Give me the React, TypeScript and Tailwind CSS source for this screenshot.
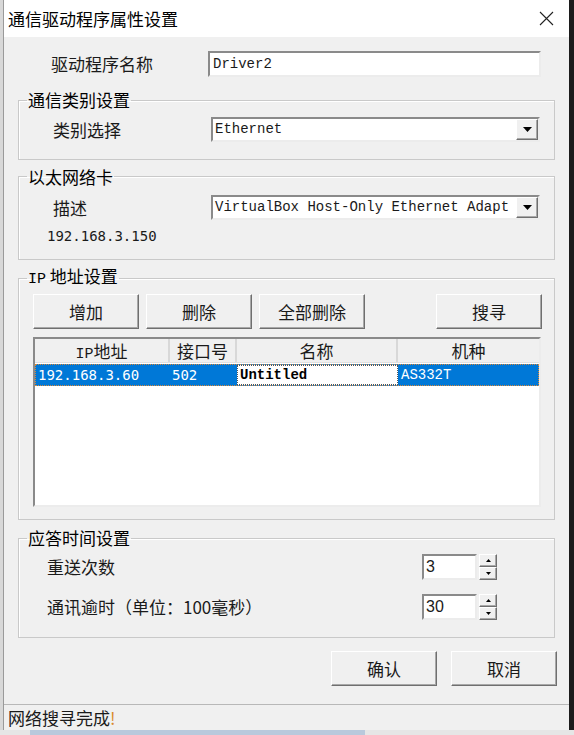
import React from "react";

const raised =
  "bg-[#f0f0f0] border border-t-white border-l-white border-b-[#6f6f6f] border-r-[#6f6f6f] shadow-[inset_-1px_-1px_0_#a8a8a8]";
const sunken =
  "bg-white border-2 border-t-[#8a8a8a] border-l-[#8a8a8a] border-b-[#ececec] border-r-[#ececec]";
const mono = "font-['Liberation_Mono','Noto_Sans_CJK_SC',monospace]";
const sansMono = "font-['DejaVu_Sans_Mono','Noto_Sans_CJK_SC',monospace]";

function Group({
  title,
  className,
  children,
}: {
  title: React.ReactNode;
  className?: string;
  children: React.ReactNode;
}) {
  return (
    <fieldset
      className={`border border-[#c9c9c9] shadow-[inset_1px_1px_0_#fff] px-0 ${className ?? ""}`}
    >
      <legend className="ml-[8px] px-[1px] text-[17px] leading-[20px] text-black">{title}</legend>
      {children}
    </fieldset>
  );
}

function Combo({ value }: { value: string }) {
  return (
    <div className={`flex h-[25px] w-[329px] ml-auto mr-[14px] ${sunken}`}>
      <div className={`flex-1 overflow-hidden whitespace-nowrap pl-[2px] text-[14px] leading-[21px] ${mono}`}>
        {value}
      </div>
      <div className={`w-[22px] h-full flex items-center justify-center ${raised}`}>
        <svg width="9" height="5" viewBox="0 0 9 5">
          <path d="M0 0h9L4.5 5z" fill="#000" />
        </svg>
      </div>
    </div>
  );
}

function Btn({ label, className }: { label: string; className?: string }) {
  return (
    <div
      className={`w-[106px] h-[35px] flex items-center justify-center text-[17px] ${raised} ${className ?? ""}`}
    >
      {label}
    </div>
  );
}

function Spinner({ value }: { value: string }) {
  return (
    <div className="flex ml-auto mr-[57px] h-[26px]">
      <div className={`w-[55px] h-full pl-[2px] text-[16px] leading-[22px] font-['Liberation_Sans',sans-serif] ${sunken}`}>
        {value}
      </div>
      <div className="ml-[2px] w-[18px] flex flex-col">
        <div className={`flex-1 flex items-center justify-center ${raised}`}>
          <svg width="5" height="3" viewBox="0 0 5 3">
            <path d="M2.5 0L5 3H0z" fill="#000" />
          </svg>
        </div>
        <div className={`flex-1 flex items-center justify-center ${raised}`}>
          <svg width="5" height="3" viewBox="0 0 5 3">
            <path d="M0 0h5L2.5 3z" fill="#000" />
          </svg>
        </div>
      </div>
    </div>
  );
}

export default function App() {
  return (
    <div className="w-[574px] h-[735px] flex flex-col bg-[#e6e6e6] overflow-hidden font-['Noto_Sans_CJK_SC',sans-serif] text-[#1a1a1a]">
      <div className="flex h-[730px]">
        <div className="w-[3px] bg-[#d8d8d8]" />
        <div className="w-[566px] flex flex-col bg-[#f0f0f0] border-l border-[#9a9a9a]">
          {/* title bar */}
          <div className="h-[37px] bg-white flex items-center pl-[4px] shrink-0">
            <span className="text-[17px] leading-none text-black">通信驱动程序属性设置</span>
            <svg className="ml-auto mr-[15px]" width="15" height="15" viewBox="0 0 15 15">
              <path d="M1 1L14 14M14 1L1 14" stroke="#222" strokeWidth="1.1" />
            </svg>
          </div>

          <div className="flex flex-col px-[14px]">
            <div className="flex items-center mt-[14px] h-[26px]">
              <span className="pl-[33px] text-[17px]">驱动程序名称</span>
              <div className={`ml-auto mr-[14px] h-[26px] w-[333px] pl-[3px] text-[14px] leading-[22px] ${mono} ${sunken}`}>
                Driver2
              </div>
            </div>

            <Group title="通信类别设置" className="mt-[13px] pb-[16px]">
              <div className="flex items-center mt-[7px]">
                <span className="pl-[34px] text-[17px]">类别选择</span>
                <Combo value="Ethernet" />
              </div>
            </Group>

            <Group title="以太网络卡" className="mt-[7px] pb-[14px]">
              <div className="flex items-center mt-[8px]">
                <span className="pl-[34px] text-[17px]">描述</span>
                <Combo value="VirtualBox Host-Only Ethernet Adapt" />
              </div>
              <div className={`mt-[7px] pl-[28px] text-[14px] leading-[18px] ${sansMono}`}>192.168.3.150</div>
            </Group>

            <Group
              title={
                <>
                  <span className={`text-[15px] ${mono}`}>IP</span> 地址设置
                </>
              }
              className="mt-[6px] pb-[12px]"
            >
              <div className="flex mt-[4px] pl-[14px] pr-[12px] gap-[7px]">
                <Btn label="增加" />
                <Btn label="删除" />
                <Btn label="全部删除" />
                <Btn label="搜寻" className="ml-auto" />
              </div>
              <div className={`mt-[8px] ml-[14px] w-[508px] h-[170px] flex flex-col ${sunken}`}>
                <div className="flex h-[24px] bg-[#f0f0f0] text-[17px] leading-[24px] border-b border-[#e0e0e0]">
                  <div className="w-[135px] text-center border-r-2 border-[#d8d8d8]">
                    <span className={`text-[15px] ${mono}`}>IP</span>地址
                  </div>
                  <div className="w-[67px] text-center border-r-2 border-[#d8d8d8]">接口号</div>
                  <div className="w-[161px] text-center border-r-2 border-[#d8d8d8]">名称</div>
                  <div className="flex-1 text-center">机种</div>
                </div>
                <div className="mt-[1px] flex h-[22px] bg-[#0078d7] text-white border border-dotted border-[#d9883a] leading-[20px]">
                  <div className={`w-[134px] pl-[2px] text-[14px] ${sansMono}`}>192.168.3.60</div>
                  <div className={`w-[67px] pl-[2px] text-[14px] ${sansMono}`}>502</div>
                  <div className={`w-[161px] bg-white text-black pl-[2px] text-[14px] font-bold border border-dotted border-[#555] leading-[18px] ${mono}`}>
                    Untitled
                  </div>
                  <div className={`flex-1 pl-[3px] text-[14px] ${mono}`}>AS332T</div>
                </div>
              </div>
            </Group>

            <Group title="应答时间设置" className="mt-[8px] pb-[17px]">
              <div className="flex items-center mt-[6px]">
                <span className="pl-[28px] text-[17px]">重送次数</span>
                <Spinner value="3" />
              </div>
              <div className="flex items-center mt-[14px]">
                <span className="pl-[28px] text-[17px]">通讯逾时（单位：100毫秒）</span>
                <Spinner value="30" />
              </div>
            </Group>
          </div>

          <div className="flex justify-end gap-[14px] mt-[13px] pr-[12px]">
            <Btn label="确认" />
            <Btn label="取消" />
          </div>

          <div className="mt-auto h-[26px] border-t border-[#b8b8b8] flex items-center pl-[4px]">
            <span className="text-[17px] leading-none">
              网络搜寻完成<span className="text-[#d98a2a]">!</span>
            </span>
          </div>
        </div>
        <div className="w-[5px] bg-[#1c1c1c]" />
      </div>
      <div className="h-[5px] flex">
        <div className="w-[30px] bg-[#e6e6e6]" />
        <div className="w-[335px] bg-[#b9c9dc]" />
      </div>
    </div>
  );
}
